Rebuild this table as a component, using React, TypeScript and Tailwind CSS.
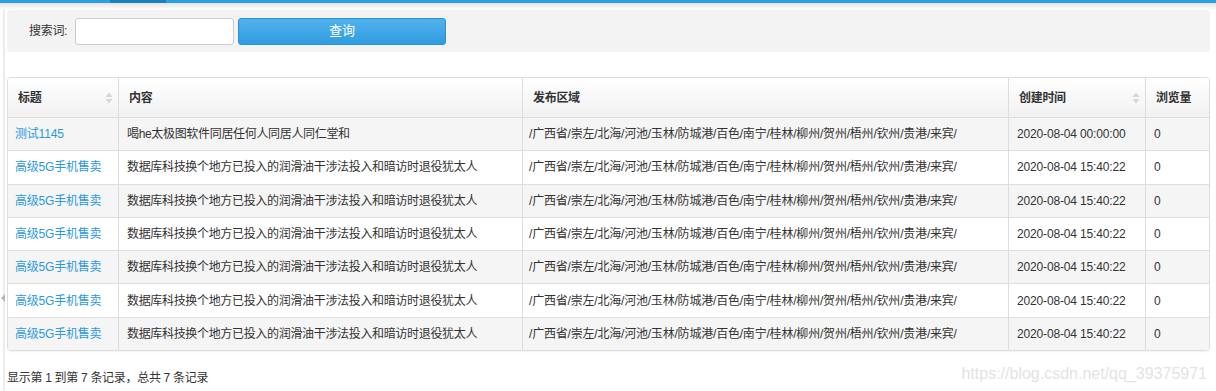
const region = '/广西省/崇左/北海/河池/玉林/防城港/百色/南宁/桂林/柳州/贺州/梧州/钦州/贵港/来宾/';

const rows = [
  { title: '测试1145', content: '喝he太极图软件同居任何人同居人同仁堂和', date: '2020-08-04 00:00:00' },
  ...Array.from({ length: 6 }, () => ({
    title: '高级5G手机售卖',
    content: '数据库科技换个地方已投入的润滑油干涉法投入和暗访时退役犹太人',
    date: '2020-08-04 15:40:22',
  })),
];

function SortIcon() {
  return (
    <svg width="8" height="14" viewBox="0 0 8 14" className="shrink-0">
      <path d="M4 1.5 L7.5 6 H0.5 Z" fill="#d6d6d6" />
      <path d="M4 12.5 L7.5 8 H0.5 Z" fill="#d6d6d6" />
    </svg>
  );
}

const headers = [
  { label: '标题', sort: true },
  { label: '内容' },
  { label: '发布区域' },
  { label: '创建时间', sort: true },
  { label: '浏览量' },
];

export default function App() {
  return (
    <div className="relative w-[1216px] h-[391px] overflow-hidden bg-white text-[12px] text-[#333] font-['Liberation_Sans','Noto_Sans_CJK_SC',sans-serif]">
      {/* top nav strip */}
      <div className="flex h-[3px] bg-[#2b9fe3]">
        <div className="ml-[110px] w-[56px] bg-[#1b7fc0]" />
      </div>
      <div className="h-[7px] bg-linear-to-b from-[#e4e4e4] to-white" />

      <div className="flex">
        <div className="w-[5px] border-r-2 border-[#ececec] h-[381px]" />
        <div className="flex-1 pl-[2px] pr-[6px]">
          {/* search bar */}
          <div className="flex h-[42px] items-center rounded-[4px] bg-[#f3f3f3] pl-[22px]">
            <span className="w-[46px] tracking-[-0.3px]">搜索词:</span>
            <input className="h-[27px] w-[159px] rounded-[3px] border border-[#cccccc] bg-white px-2 outline-none" />
            <button className="ml-[4px] h-[27px] w-[208px] rounded-[3px] border border-[#2b90d4] bg-linear-to-b from-[#52b2ec] to-[#2e9ce0] text-[13px] text-white">
              查询
            </button>
          </div>

          {/* table */}
          <div className="mt-[25px] overflow-hidden rounded-[4px] border border-[#dddddd] shadow-[0_1px_2px_rgba(0,0,0,0.06)]">
            <div className="grid grid-cols-[110px_404px_486px_137px_64px]">
              {headers.map((h, i) => (
                <div
                  key={h.label}
                  className={`flex h-[39px] items-center justify-between bg-linear-to-b from-white to-[#f1f1f1] pl-[10px] pr-[5px] font-bold tracking-[-0.3px] ${i ? 'border-l border-[#dddddd]' : ''}`}
                >
                  <span>{h.label}</span>
                  {h.sort && <SortIcon />}
                </div>
              ))}
              {rows.map((r, i) => {
                const bg = i % 2 === 0 ? 'bg-[#f5f5f5]' : 'bg-white';
                const cell = `flex h-[33.3px] items-center border-t border-[#dddddd] ${bg}`;
                return [
                  <div key={`${i}a`} className={`${cell} pl-[7px] text-[#2a9ae0] tracking-[-0.2px]`}>{r.title}</div>,
                  <div key={`${i}b`} className={`${cell} border-l pl-[8px] tracking-[-0.33px]`}>{r.content}</div>,
                  <div key={`${i}c`} className={`${cell} border-l pl-[6px] whitespace-nowrap tracking-[-0.2px]`}>{region}</div>,
                  <div key={`${i}d`} className={`${cell} border-l pl-[8px] tracking-[-0.15px]`}>{r.date}</div>,
                  <div key={`${i}e`} className={`${cell} border-l pl-[8px]`}>0</div>,
                ];
              })}
            </div>
          </div>

          <div className="mt-[19px] leading-[16px] tracking-[-0.3px]">显示第 1 到第 7 条记录，总共 7 条记录</div>
        </div>
      </div>

      {/* collapse handle */}
      <div className="absolute left-[1px] top-[294px] h-0 w-0 border-y-[4px] border-r-[4px] border-y-transparent border-r-[#b5b5b5]" />

      {/* watermark */}
      <div className="absolute right-[9px] top-[362px] text-[16px] text-[#e3e3e3]">https://blog.csdn.net/qq_39375971</div>
    </div>
  );
}
